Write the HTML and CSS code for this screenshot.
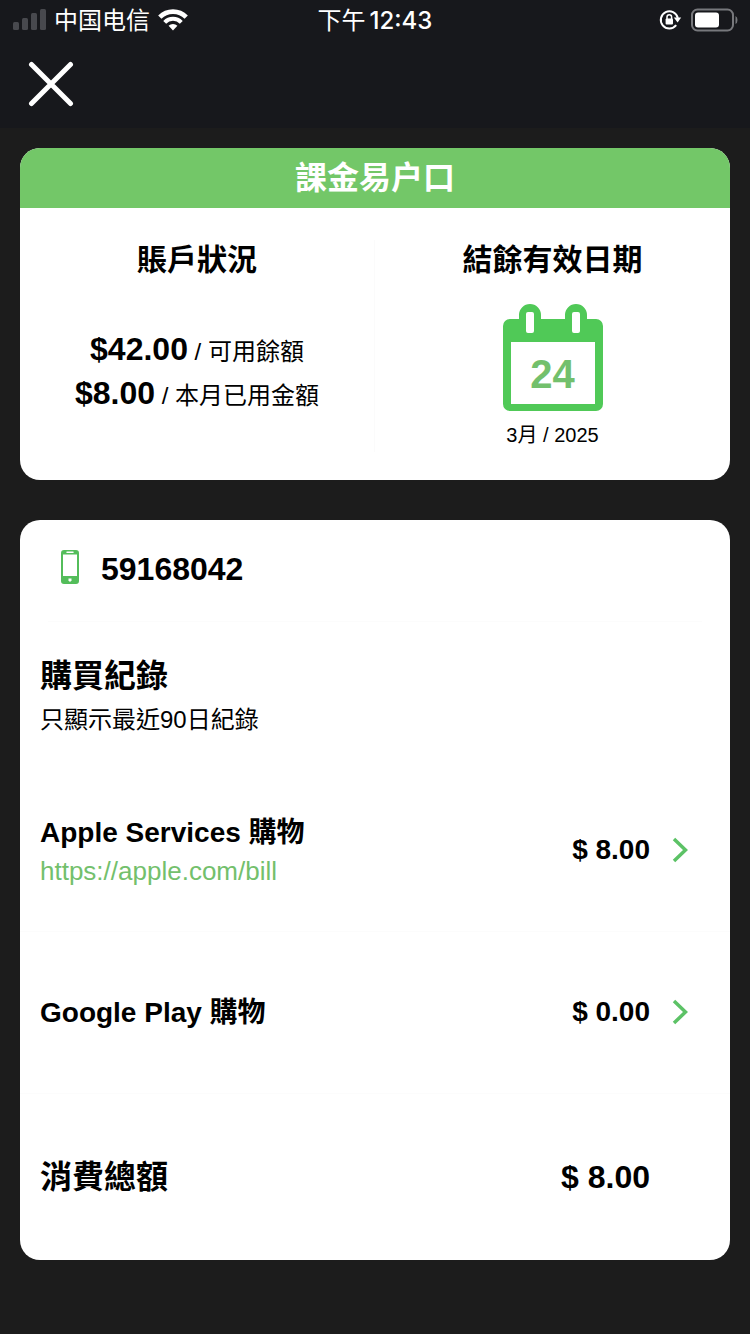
FILE: index.html
```html
<!DOCTYPE html>
<html lang="zh-Hant">
<head>
<meta charset="utf-8">
<meta name="viewport" content="width=device-width, initial-scale=1">
<title>課金易户口</title>
<link rel="stylesheet" href="styles.css">
</head>
<body>
<header class="top">
  <div class="status">
    <div class="status-left">
      <svg class="signal" width="34" height="22" viewBox="0 0 34 22" fill="#48494e" aria-hidden="true"><rect x="1" y="13" width="6" height="8" rx="1.500"/><rect x="10" y="9" width="6" height="12" rx="1.500"/><rect x="19" y="4" width="6" height="17" rx="1.500"/><rect x="28" y="0" width="6" height="21" rx="1.500"/></svg>
      <span class="carrier">中国电信</span>
      <svg class="wifi" width="30" height="22" viewBox="0 0 30 22" fill="none" aria-hidden="true"><path d="M1.800 8.200a18.500 18.500 0 0 1 26.400 0" stroke="#fff" stroke-width="4.600"/><path d="M6.700 13.300a11.500 11.500 0 0 1 16.600 0" stroke="#fff" stroke-width="4"/><path d="M10.600 16.800a6.200 6.200 0 0 1 8.800 0L15 21.600z" fill="#fff"/></svg>
    </div>
    <div class="clock"><span>下午</span><span class="clock-time">12:43</span></div>
    <div class="status-right">
      <svg width="23" height="22" viewBox="0 0 23 22" fill="none" aria-hidden="true"><path d="M17.200 16.200A8.600 8.600 0 1 1 18.800 9" stroke="#fff" stroke-width="2"/><path d="M14.800 8.600h7.400L18.600 13.600z" fill="#fff"/><rect x="6.600" y="9.600" width="7.400" height="5.800" rx="1" fill="#fff"/><path d="M8 10V8a2.300 2.300 0 0 1 4.600 0V10" stroke="#fff" stroke-width="1.500"/></svg>
      <svg width="48" height="24" viewBox="0 0 48 24" aria-hidden="true"><rect x="2" y="1.500" width="41" height="21" rx="5.500" fill="none" stroke="#77787c" stroke-width="2"/><rect x="5" y="4.500" width="24" height="15" rx="3" fill="#fff"/><path d="M45.500 8v8q2-1 2-4t-2-4z" fill="#77787c"/></svg>
    </div>
  </div>
  <button class="close" type="button" aria-label="關閉">
    <svg width="46" height="46" viewBox="0 0 46 46" fill="none" stroke="#fff" stroke-width="5" stroke-linecap="round"><path d="M3.500 3.500l39 39M42.500 3.500l-39 39"/></svg>
  </button>
</header>
<main class="content">
  <section class="card">
    <h1 class="card-title">課金易户口</h1>
    <div class="summary">
      <div class="account">
        <h2 class="subtitle">賬戶狀況</h2>
        <div class="balances">
          <p class="balance"><strong class="sum">$42.00</strong> / 可用餘額</p>
          <p class="balance"><strong class="sum">$8.00</strong> / 本月已用金額</p>
        </div>
      </div>
      <div class="expiry">
        <h2 class="subtitle">結餘有效日期</h2>
        <div class="calendar">
          <svg class="calendar-art" width="100" height="107" viewBox="0 0 100 107" aria-hidden="true"><path fill="#50c957" fill-rule="evenodd" d="M7 15H16V11a11 11 0 0 1 22 0v4H62V11a11 11 0 0 1 22 0v4h9a7 7 0 0 1 7 7v78a7 7 0 0 1-7 7H7a7 7 0 0 1-7-7V22a7 7 0 0 1 7-7zM8 38v62h84V38zM25 8a2 2 0 0 0-2 2v17a2 2 0 0 0 2 2h4a2 2 0 0 0 2-2V10a2 2 0 0 0-2-2zM71 8a2 2 0 0 0-2 2v17a2 2 0 0 0 2 2h4a2 2 0 0 0 2-2V10a2 2 0 0 0-2-2z"/></svg>
          <span class="day">24</span>
        </div>
        <p class="month">3月 / 2025</p>
      </div>
    </div>
  </section>
  <section class="card">
    <div class="phone">
      <svg width="18" height="34" viewBox="0 0 18 34" aria-hidden="true"><path fill="#53bd5a" fill-rule="evenodd" d="M3 0h12a3 3 0 0 1 3 3v28a3 3 0 0 1-3 3H3a3 3 0 0 1-3-3V3a3 3 0 0 1 3-3zM2 4.500v21.500h14V4.500z"/><path d="M6 2.300h6" stroke="#fff" stroke-width="1.500" stroke-linecap="round"/><path d="M7.500 28.500h3v2L9 32l-1.500-1.500z" fill="#fff"/></svg>
      <span class="number">59168042</span>
    </div>
    <div class="records">
      <h2 class="heading">購買紀錄</h2>
      <p class="note">只顯示最近90日紀錄</p>
    </div>
    <div class="row">
      <div class="row-text">
        <h3 class="merchant">Apple Services 購物</h3>
        <a class="link" href="https://apple.com/bill">https://apple.com/bill</a>
      </div>
      <button class="price" type="button"><span>$ 8.00</span><svg width="16" height="26" viewBox="0 0 16 26" fill="none" stroke="#5cc266" stroke-width="3.500" aria-hidden="true"><path d="M2 2l11.500 11L2 24"/></svg></button>
    </div>
    <div class="row">
      <h3 class="merchant">Google Play 購物</h3>
      <button class="price" type="button"><span>$ 0.00</span><svg width="16" height="26" viewBox="0 0 16 26" fill="none" stroke="#5cc266" stroke-width="3.500" aria-hidden="true"><path d="M2 2l11.500 11L2 24"/></svg></button>
    </div>
    <div class="total">
      <h2 class="heading">消費總額</h2>
      <strong class="sum">$ 8.00</strong>
    </div>
  </section>
</main>
</body>
</html>
```
FILE: styles.css
```css
* { box-sizing: border-box; }

body {
  margin: 0;
  min-height: 100vh;
  background: #1c1c1c;
  color: #000;
  font-family: "Liberation Sans", "Noto Sans CJK TC", sans-serif;
}

h1, h2, h3, p { margin: 0; }
svg { display: block; flex: none; }
button { border: 0; padding: 0; background: none; cursor: pointer; }

.top {
  height: 128px;
  background: #17181c;
  color: #fff;
}

.status {
  display: grid;
  grid-template-columns: 1fr auto 1fr;
  align-items: center;
  height: 40px;
  padding: 0 12px;
  font: 24px/36px Inter, "Noto Sans CJK SC", sans-serif;
}
.status-left { display: flex; align-items: center; gap: 8px; }
.carrier { padding-top: 2px; }
.clock { display: flex; gap: 4px; padding-top: 2px; }
.clock-time { font-weight: 500; }
.status-right {
  display: flex;
  justify-content: flex-end;
  align-items: center;
  gap: 8px;
}

.close { display: block; margin: 21px 28px 0; }

.content {
  display: grid;
  gap: 40px;
  padding: 20px 20px 74px;
}
.card { overflow: hidden; border-radius: 20px; background: #fff; }
.card-title {
  background: #73c768;
  color: #fff;
  font-size: 32px;
  line-height: 60px;
  text-align: center;
}

.summary {
  display: grid;
  grid-template-columns: 1fr 1fr;
  min-height: 272px;
  padding: 32px 0 28px;
  text-align: center;
}
.account { border-right: 1px solid #fbfbfb; }
.subtitle { font-size: 30px; line-height: 40px; }
.balances { padding-top: 50px; }
.balance { font-size: 24px; line-height: 44px; }
.sum { font-size: 32px; line-height: 32px; }

.calendar {
  display: grid;
  justify-content: center;
  margin-top: 24px;
}
.calendar-art, .day { grid-area: 1 / 1; }
.day {
  padding-top: 48px;
  color: #73c06c;
  font-size: 40px;
  font-weight: bold;
  line-height: 44px;
}
.month { padding-top: 8px; font-size: 20px; line-height: 32px; }

.phone {
  display: flex;
  align-items: center;
  gap: 22px;
  height: 102px;
  margin: 0 28px;
  padding: 0 13px 8px;
  border-bottom: 1px solid #fcfcfc;
  font-size: 32px;
  font-weight: bold;
}
.number { padding-top: 5px; }
.records { height: 148px; padding: 32px 20px 0; }
.heading { font-size: 32px; line-height: 44px; }
.note { font-size: 24px; line-height: 44px; }

.row {
  display: flex;
  justify-content: space-between;
  align-items: center;
  height: 162px;
  padding: 0 42px 0 20px;
  border-bottom: 1px solid #fcfcfc;
}
.merchant { font-size: 28px; line-height: 40px; }
.link {
  display: block;
  color: #73c06c;
  font-size: 26px;
  line-height: 36px;
  text-decoration: none;
}
.price {
  display: flex;
  align-items: center;
  gap: 22px;
  padding-bottom: 2px;
  color: #000;
  font: bold 28px/40px "Liberation Sans", sans-serif;
}
.total {
  display: flex;
  justify-content: space-between;
  align-items: center;
  height: 166px;
  padding: 0 80px 0 20px;
}
```
